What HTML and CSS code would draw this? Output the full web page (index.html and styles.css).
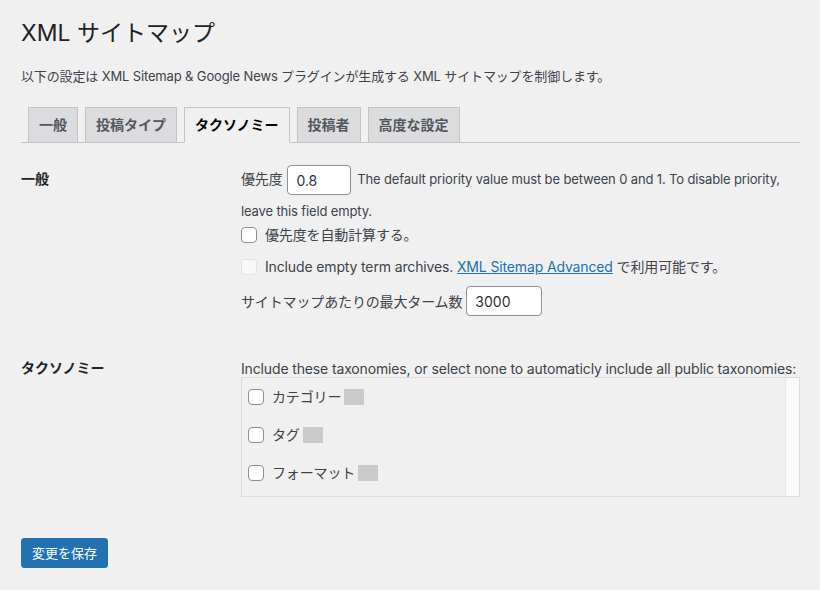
FILE: index.html
```html
<!DOCTYPE html>
<html lang="ja">
<head>
<meta charset="utf-8">
<title>XML サイトマップ</title>
<link rel="stylesheet" href="styles.css">
</head>
<body>
<div class="wrap">
  <h1 class="title">XML サイトマップ</h1>
  <p class="intro">以下の設定は XML Sitemap &amp; Google News プラグインが生成する XML サイトマップを制御します。</p>

  <nav class="tabs">
    <a class="tab">一般</a>
    <a class="tab">投稿タイプ</a>
    <a class="tab active">タクソノミー</a>
    <a class="tab">投稿者</a>
    <a class="tab">高度な設定</a>
  </nav>

  <div class="form">
    <div class="row row-general">
      <div class="th">一般</div>
      <div class="td">
        <p class="priority"><label>優先度</label> <input class="field small" type="text" value="0.8"> <span class="desc">The default priority value must be between 0 and 1. To disable priority, leave this field empty.</span></p>
        <label class="check"><span class="box"></span>優先度を自動計算する。</label>
        <label class="check disabled"><span class="box"></span>Include empty term archives.&nbsp;<a class="link">XML Sitemap Advanced</a>&nbsp;で利用可能です。</label>
        <p class="max"><label>サイトマップあたりの最大ターム数</label><input class="field medium" type="text" value="3000"></p>
      </div>
    </div>

    <div class="row row-tax">
      <div class="th">タクソノミー</div>
      <div class="td">
        <p class="include">Include these taxonomies, or select none to automaticly include all public taxonomies:</p>
        <div class="list">
          <ul class="items">
            <li class="check"><span class="box"></span>カテゴリー<span class="count"></span></li>
            <li class="check"><span class="box"></span>タグ<span class="count"></span></li>
            <li class="check"><span class="box"></span>フォーマット<span class="count"></span></li>
          </ul>
          <div class="scroll"></div>
        </div>
      </div>
    </div>
  </div>

  <div class="submit"><button class="button">変更を保存</button></div>
</div>
</body>
</html>
```

FILE: styles.css
```css
* { box-sizing: border-box; }

body {
  margin: 0;
  background: #f0f0f1;
  color: #3c434a;
  font-family: Inter, "Noto Sans CJK JP", sans-serif;
  font-size: 13px;
  letter-spacing: -0.14px;
}

.wrap {
  padding: 18px 20px 0 21px;
}

.title {
  margin: 0;
  font-size: 23px;
  font-weight: 400;
  line-height: 30px;
  color: #1d2327;
  letter-spacing: 0;
}

.intro {
  margin: 18px 0 0;
  line-height: 20px;
  color: #3c434a;
}

.tabs {
  display: flex;
  margin-top: 21px;
  border-bottom: 1px solid #c3c4c7;
  height: 36px;
}

.tab {
  display: block;
  margin: 0 0 -1px 7px;
  padding: 5px 10px;
  font-size: 14px;
  line-height: 24px;
  font-weight: 600;
  color: #50575e;
  background: #dcdcde;
  border: 1px solid #c3c4c7;
  letter-spacing: 0;
}

.tab.active {
  background: #f0f0f1;
  color: #000;
  border-bottom-color: #f0f0f1;
}

.form {
  margin-top: 7px;
}

.row {
  display: grid;
  grid-template-columns: 220px 1fr;
}

.th {
  padding: 20px 10px 20px 0;
  font-size: 14px;
  line-height: 18px;
  font-weight: 600;
  color: #1d2327;
  letter-spacing: 0;
}

.td {
  padding: 13px 0 18px 0;
  font-size: 14px;
}

.priority {
  margin: 0;
  line-height: 32px;
}

.desc {
  font-size: 13px;
  color: #3c434a;
}

.field {
  height: 30px;
  padding: 0 8px;
  border: 1px solid #8c8f94;
  border-radius: 4px;
  background: #fff;
  font-family: inherit;
  font-size: 14px;
  color: #2c3338;
  vertical-align: middle;
  letter-spacing: 0;
}

.small { width: 64px; margin: 0 2px 0 1px; }
.medium { width: 76px; margin-left: 4px; }

.check {
  display: flex;
  align-items: center;
  line-height: 20px;
}

.td > .check { margin-top: -2px; }
.td > .check + .check { margin-top: 12px; }

.box {
  width: 16px;
  height: 16px;
  margin-right: 8px;
  border: 1px solid #8c8f94;
  border-radius: 4px;
  background: #fff;
  flex: none;
}

.disabled .box {
  background: rgba(255,255,255,.5);
  border-color: rgba(220,220,222,.75);
}

.link {
  color: #2271b1;
  text-decoration: underline;
}

.max {
  margin: 9px 0 0;
  display: flex;
  align-items: center;
}

.row-tax .th { padding-top: 25px; }
.row-tax .td { padding-top: 26px; }

.include {
  margin: 0;
  line-height: 17px;
}

.list {
  display: flex;
  height: 120px;
  border: 1px solid #dcdcde;
}

.items {
  flex: 1;
  list-style: none;
  margin: 0;
  padding: 9px 6px;
}

.items .check {
  height: 20px;
}

.items .check + .check { margin-top: 18px; }

.count {
  display: inline-block;
  width: 20px;
  height: 16px;
  margin-left: 3px;
  background: #cacacd;
}

.scroll {
  width: 14px;
  background: #fafafa;
  border-left: 1px solid #e6e6e6;
}

.submit {
  margin-top: 23px;
}

.button {
  height: 30px;
  padding: 0 10px;
  border: 1px solid #2271b1;
  border-radius: 3px;
  background: #2271b1;
  color: #fff;
  font-family: inherit;
  font-size: 13px;
  line-height: 28px;
}
```
